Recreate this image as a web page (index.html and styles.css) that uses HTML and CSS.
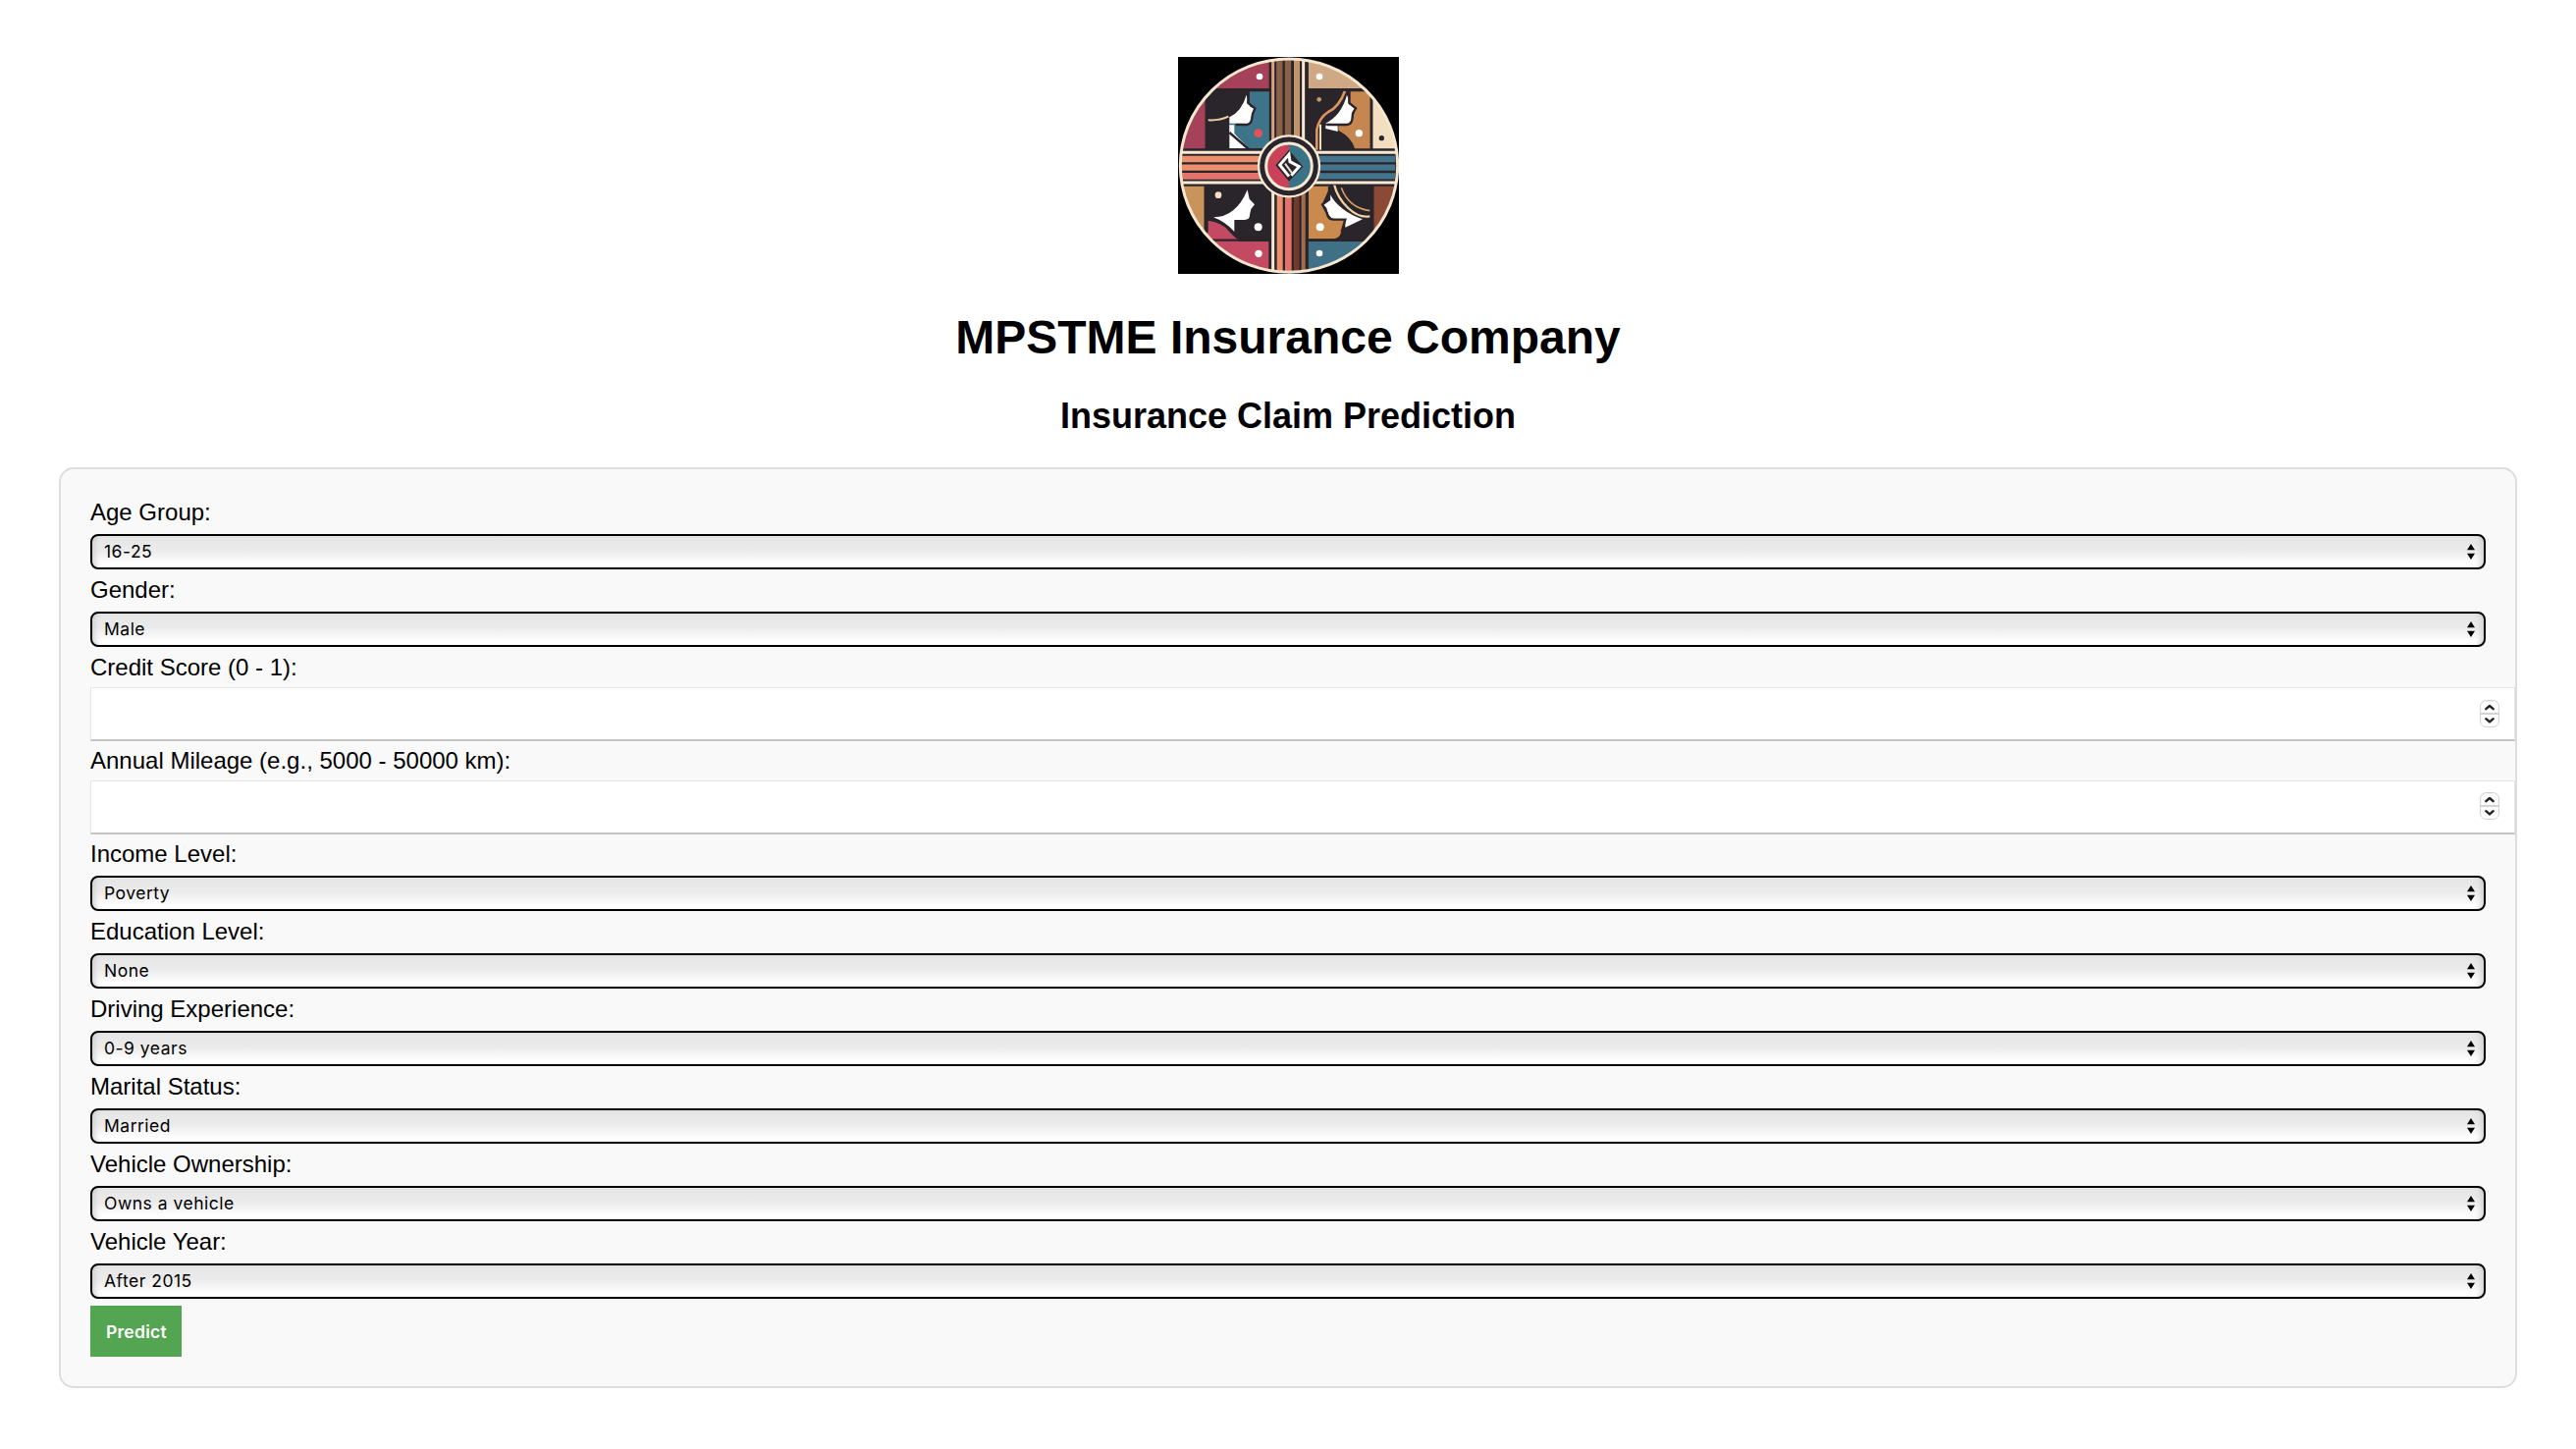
FILE: index.html
```html
<!DOCTYPE html>
<html lang="en">
<head>
<meta charset="utf-8">
<title>Insurance Claim Prediction</title>
<link rel="stylesheet" href="styles.css">
</head>
<body>
<svg class="symbols" width="0" height="0" aria-hidden="true">
  <symbol id="arrows" viewBox="0 0 8 16"><path d="M4 0 8 6.2H0ZM4 16 0 9.8H8Z"/></symbol>
  <symbol id="stepper" viewBox="0 0 20 28">
    <rect class="step-shade" x=".5" y=".5" width="19" height="27" rx="6"/>
    <rect class="step-face" x="1" y="1.3" width="18" height="25.7" rx="5.5"/>
    <path class="step-line" d="M1 14H19"/>
    <path class="step-mark" d="M6.3 9.2 10 6 13.7 9.2M6.3 19.2 10 22.4 13.7 19.2"/>
  </symbol>
</svg>
<header class="header">
  <svg class="logo" viewBox="30 24 675 663" preserveAspectRatio="none" role="img" aria-label="MPSTME logo">
    <defs><clipPath id="disc"><ellipse cx="369" cy="356" rx="331" ry="325"/></clipPath></defs>
    <rect x="30" y="24" width="675" height="663" fill="#000"/>
    <g clip-path="url(#disc)">
      <rect x="30" y="24" width="675" height="663" fill="#2a242b"/>
      <!-- top left -->
      <path fill="#a5425a" d="M30 24H308V120H113V306H30Z"/>
      <path fill="#3d7489" d="M248 130H309V304H248L186 250V228H235L262 185 248 165Z"/>
      <path fill="#fff" d="M239 140 250 176 264 181 258 198 256 212Q256 228 240 228L187 227V208Q225 190 239 140ZM187 232H202V258L246 304H187Z"/>
      <path fill="none" stroke="#2a242b" stroke-width="7" d="M244 125V165L265 181 258 198 255 216Q252 231 236 231H206M187 255 246 306"/>
      <path fill="none" stroke="#f0cfa0" stroke-width="6" d="M122 217Q157 219 184 206"/>
      <circle cx="275" cy="257" r="13" fill="#e2515c"/>
      <!-- top right -->
      <path fill="#cfa885" d="M428 24H640V120H428Z"/>
      <path fill="#c58650" d="M556 130H617V304H570Q561 270 520 248V228H560L570 190 556 165Z"/>
      <path fill="#f3dfc0" d="M625 120H705V306H625Z"/>
      <path fill="#fff" d="M546 140 558 172 571 181 562 212Q560 230 545 230L480 227Q529 203 546 140ZM481 233H518V252L481 243Z"/>
      <path fill="none" stroke="#2a242b" stroke-width="7" d="M553 125V165L573 181 564 196 562 216Q558 231 545 231H486"/>
      <path fill="none" stroke="#dc9460" stroke-width="8" d="M540 128Q522 177 489 192 461 210 454 246V310"/>
      <path fill="none" stroke="#f3dfc0" stroke-width="6" d="M465 310V230"/>
      <circle cx="461" cy="154" r="7" fill="#c99768"/><circle cx="652" cy="272" r="8" fill="#2a242b"/>
      <!-- bottom left -->
      <path fill="#c9935c" d="M30 419H113V580H30Z"/>
      <path fill="#c44a64" d="M122 524Q175 531 212 580L215 588H307V687H60V560H122Z"/>
      <path fill="none" stroke="#2a242b" stroke-width="7" d="M115 420V570M120 520Q168 524 192 559L212 578"/>
      <path fill="#fff" d="M242 430 248 458 264 475 253 489 249 507Q249 522 232 522H202V558Q177 529 138 514 207 514 242 430Z"/>
      <circle cx="153" cy="446" r="10" fill="#f2dfc5"/>
      <!-- bottom right -->
      <path fill="#ca8a4e" d="M428 419H495L470 475 490 520H539L528 560Q524 580 498 580H428Z"/>
      <path fill="#8b4a36" d="M625 419H705V580H625Z"/>
      <path fill="#3f7086" d="M428 588H680V687H428Z"/>
      <path fill="#fff" d="M494 443Q522 494 594 520L541 545V521L500 519 487 502 484 486 474 475 487 466Z"/>
      <path fill="none" stroke="#2a242b" stroke-width="7" d="M492 420V460L471 475 485 500Q487 520 506 521H541L530 558"/>
      <path fill="none" stroke="#efd3a2" stroke-width="7" d="M507 413Q517 455 550 486T616 511"/>
      <path fill="none" stroke="#d69d64" stroke-width="5" d="M529 424Q552 486 616 494"/>
      <path fill="none" stroke="#2a242b" stroke-width="7" d="M113 124H312V307H40M117 124V306M425 124H621V307H700M113 418V584H312M425 418V584H625V418"/>
      <g fill="#fff"><circle cx="279" cy="84" r="10"/><circle cx="462" cy="84" r="10"/><circle cx="583" cy="257" r="11"/><circle cx="275" cy="544" r="12"/><circle cx="464" cy="544" r="12"/><circle cx="276" cy="625" r="11"/><circle cx="462" cy="624" r="10"/></g>
      <!-- crossing bands -->
      <rect x="310" y="24" width="118" height="663" fill="#2a242b"/>
      <rect x="30" y="308" width="675" height="108" fill="#2a242b"/>
      <path stroke="#f5e9d4" stroke-width="9" d="M413 24V312M320 410V687M40 316H700M40 408H700"/>
      <path stroke="#d6a47c" stroke-width="9" d="M320 24V290"/>
      <path stroke="#8a6046" stroke-width="19" d="M340 24V290M366 24V290"/>
      <path stroke="#c3936e" stroke-width="18" d="M393 24V290"/>
      <path stroke="#ed8f6c" stroke-width="18" d="M341 420V687"/>
      <path stroke="#ed8f6c" stroke-width="19" d="M40 336H300M40 362H300"/>
      <path stroke="#e2736b" stroke-width="20" d="M367 420V687M40 388H300"/>
      <path stroke="#713a2a" stroke-width="17" d="M392 420V687"/>
      <path stroke="#a36d4d" stroke-width="12" d="M413 420V687"/>
      <path stroke="#43748b" stroke-width="19" d="M430 336H694M430 362H694M430 388H694"/>
    </g>
    <ellipse cx="369" cy="356" rx="332" ry="326" fill="none" stroke="#f5e6cf" stroke-width="9"/>
    <circle cx="369" cy="358" r="93" fill="#2a242b" stroke="#f5e9d4" stroke-width="7"/>
    <path fill="#ca4259" d="M369 290A68 68 0 0 0 369 426Z"/>
    <path fill="#3a7287" d="M369 290A68 68 0 0 1 369 426Z"/>
    <circle cx="369" cy="358" r="70" fill="none" stroke="#f5e9d4" stroke-width="9"/>
    <path fill="#2a242b" d="M369 308 412 359 369 404 328 355Z"/>
    <path fill="none" stroke="#fff" stroke-width="9" d="M369 389 341 354 369 322 372 344 400 359 376 386"/>
    <path fill="none" stroke="#e9dccb" stroke-width="6" d="M357 350 379 380"/>
  </svg>
  <h1 class="company">MPSTME Insurance Company</h1>
  <h2 class="title">Insurance Claim Prediction</h2>
</header>
<form class="form">
  <div class="field"><label class="label" for="age">Age Group:</label><div class="control"><select class="select" id="age"><option>16-25</option></select><svg class="arrows"><use href="#arrows"/></svg></div></div>
  <div class="field"><label class="label" for="gender">Gender:</label><div class="control"><select class="select" id="gender"><option>Male</option></select><svg class="arrows"><use href="#arrows"/></svg></div></div>
  <div class="field number"><label class="label" for="credit">Credit Score (0 - 1):</label><div class="control"><input class="input" type="number" id="credit"><svg class="stepper"><use href="#stepper"/></svg></div></div>
  <div class="field number"><label class="label" for="mileage">Annual Mileage (e.g., 5000 - 50000 km):</label><div class="control"><input class="input" type="number" id="mileage"><svg class="stepper raised"><use href="#stepper"/></svg></div></div>
  <div class="field"><label class="label" for="income">Income Level:</label><div class="control"><select class="select" id="income"><option>Poverty</option></select><svg class="arrows"><use href="#arrows"/></svg></div></div>
  <div class="field"><label class="label" for="education">Education Level:</label><div class="control"><select class="select" id="education"><option>None</option></select><svg class="arrows"><use href="#arrows"/></svg></div></div>
  <div class="field"><label class="label" for="driving">Driving Experience:</label><div class="control"><select class="select" id="driving"><option>0-9 years</option></select><svg class="arrows"><use href="#arrows"/></svg></div></div>
  <div class="field"><label class="label" for="marital">Marital Status:</label><div class="control"><select class="select" id="marital"><option>Married</option></select><svg class="arrows"><use href="#arrows"/></svg></div></div>
  <div class="field"><label class="label" for="ownership">Vehicle Ownership:</label><div class="control"><select class="select" id="ownership"><option>Owns a vehicle</option></select><svg class="arrows"><use href="#arrows"/></svg></div></div>
  <div class="field"><label class="label" for="year">Vehicle Year:</label><div class="control"><select class="select" id="year"><option>After 2015</option></select><svg class="arrows"><use href="#arrows"/></svg></div></div>
  <button class="predict" type="button">Predict</button>
</form>
</body>
</html>
```
FILE: styles.css
```css
* { box-sizing: border-box; }
body {
  margin: 0;
  padding: 58px 60px 0;
  background: #fff;
  color: #000;
  font-family: "Liberation Sans", Arial, sans-serif;
  font-size: 24px;
}
.symbols { display: none; }
.header {
  display: flex;
  flex-direction: column;
  align-items: center;
}
.logo { width: 225px; height: 221px; }
.company {
  margin: 38px 0 0;
  font-size: 48px;
  line-height: 54px;
}
.title {
  margin: 33px 0 0;
  font-size: 36px;
  line-height: 40px;
}
.form {
  margin-top: 32px;
  padding: 30px;
  border: 2px solid #ddd;
  border-radius: 15px;
  background: #f9f9f9;
}
.field {
  display: flex;
  flex-direction: column;
  gap: 9px;
  padding-bottom: 7px;
}
.number { gap: 7px; padding-bottom: 6px; margin-right: -30px; }
.label { line-height: 27px; }
.control {
  display: grid;
  align-items: center;
}
.select, .input, .arrows, .stepper { grid-area: 1 / 1; }
.select {
  appearance: none;
  width: 100%;
  height: 36px;
  margin: 0;
  padding: 0 12px 1px;
  border: 2px solid #000;
  border-radius: 8px;
  background: linear-gradient(#e5e5e5, #ebebeb 45%, #fff 90%);
  box-shadow: inset 7px 0 6px -5px #ccc, inset -7px 0 6px -5px #ccc;
  color: #000;
  font: 17.5px Inter, sans-serif;
  letter-spacing: 0.5px;
}
.arrows {
  justify-self: end;
  width: 8px;
  height: 16px;
  margin-right: 11px;
  pointer-events: none;
}
.input {
  appearance: textfield;
  width: 100%;
  height: 55px;
  margin: 0;
  padding: 0 20px;
  border: 1px solid #e4e4e4;
  border-bottom: 2px solid #c4c4c4;
  border-radius: 0;
  background: #fff;
}
.stepper {
  justify-self: end;
  width: 20px;
  height: 28px;
  margin: 0 16px 2px 0;
}
.raised { margin-bottom: 4px; }
.step-shade { fill: #fff; stroke: #ccc; }
.step-face { fill: #fff; stroke: #e6e6e6; stroke-width: .5; }
.step-line { stroke: #d4d4d4; stroke-width: 2; }
.step-mark { fill: none; stroke: #222; stroke-width: 2.4; stroke-linecap: round; stroke-linejoin: round; }
.predict {
  display: block;
  width: 93px;
  height: 52px;
  padding: 0 0 0 1px;
  border: 0;
  background: #53a551;
  color: #fff;
  font: 600 17.5px Inter, sans-serif;
  letter-spacing: 0.3px;
}
```
